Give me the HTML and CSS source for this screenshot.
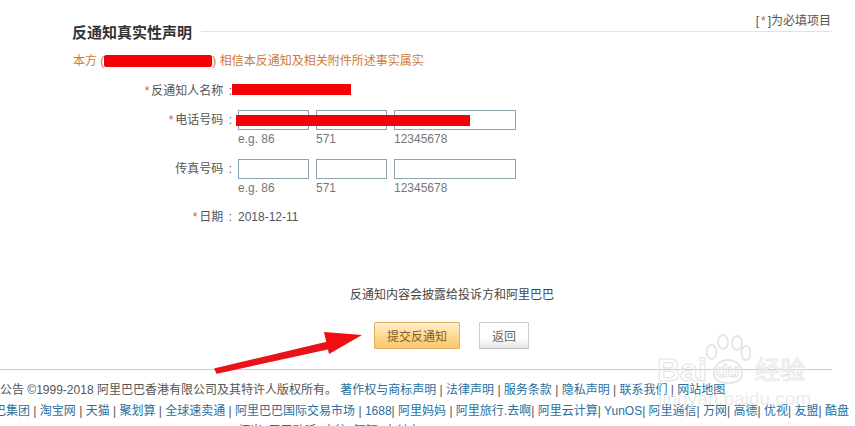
FILE: index.html
```html
<!DOCTYPE html>
<html lang="zh-CN">
<head>
  <meta charset="UTF-8">
  <title>反通知真实性声明</title>
  <link rel="stylesheet" href="styles.css">
</head>
<body>
  <div class="page">
    <div class="form-area">
      <div class="title-row">
        <h2>反通知真实性声明</h2>
        <span class="title-line"></span>
        <span class="required-note">[<i>*</i>]为必填项目</span>
      </div>

      <p class="statement">本方 (<span class="redact statement-redact"></span>) 相信本反通知及相关附件所述事实属实</p>

      <div class="field name-field">
        <label><i>*</i>反通知人名称 :</label>
        <span class="redact name-redact"></span>
      </div>

      <div class="field phone-field">
        <label><i>*</i>电话号码 :</label>
        <div class="inputs">
          <div class="part"><input type="text"><span>e.g. 86</span></div>
          <div class="part"><input type="text"><span>571</span></div>
          <div class="part wide"><input type="text"><span>12345678</span></div>
        </div>
        <span class="redact phone-redact"></span>
      </div>

      <div class="field fax-field">
        <label>传真号码 :</label>
        <div class="inputs">
          <div class="part"><input type="text"><span>e.g. 86</span></div>
          <div class="part"><input type="text"><span>571</span></div>
          <div class="part wide"><input type="text"><span>12345678</span></div>
        </div>
      </div>

      <div class="field date-field">
        <label><i>*</i>日期 :</label>
        <span class="date">2018-12-11</span>
      </div>
    </div>

    <p class="disclose">反通知内容会披露给投诉方和阿里巴巴</p>

    <div class="actions">
      <button class="btn-submit">提交反通知</button>
      <button class="btn-back">返回</button>
    </div>

    <div class="footer">
      <p>公告 ©1999-2018 阿里巴巴香港有限公司及其特许人版权所有。 <a href="#">著作权与商标声明</a> | <a href="#">法律声明</a> | <a href="#">服务条款</a> | <a href="#">隐私声明</a> | <a href="#">联系我们</a> | <a href="#">网站地图</a></p>
      <p class="group-links"><a href="#">巴集团</a> | <a href="#">淘宝网</a> | <a href="#">天猫</a> | <a href="#">聚划算</a> | <a href="#">全球速卖通</a> | <a href="#">阿里巴巴国际交易市场</a> | <a href="#">1688</a>| <a href="#">阿里妈妈</a> | <a href="#">阿里旅行.去啊</a>| <a href="#">阿里云计算</a>| <a href="#">YunOS</a>| <a href="#">阿里通信</a>| <a href="#">万网</a>| <a href="#">高德</a>| <a href="#">优视</a>| <a href="#">友盟</a>| <a href="#">酷盘</a></p>
      <p class="more-links"><a href="#">虾米</a>| <a href="#">天天动听</a>| <a href="#">来往</a>| <a href="#">钉钉</a>| <a href="#">支付宝</a></p>
    </div>

    <!-- red arrow pasted over the screenshot -->
    <svg class="arrow" width="160" height="50" viewBox="0 0 160 50">
      <path d="M4 39 L118 12 L120 18 L6 43 Z" fill="#e8141a" stroke="#e8141a" stroke-width="1.5" stroke-linejoin="round"/>
      <path d="M113 2 L151 5 L118 24 Z" fill="#f20d12"/>
    </svg>

    <div class="watermark">
      <span class="mark-bai">Bai</span>
      <svg class="paw" width="46" height="52" viewBox="0 0 46 52" fill="none" stroke="#e6e6e6" stroke-width="2">
        <ellipse cx="6.5" cy="19" rx="5" ry="7"/>
        <ellipse cx="18" cy="9" rx="5" ry="7"/>
        <ellipse cx="32" cy="10" rx="5" ry="7"/>
        <ellipse cx="41" cy="20" rx="4.5" ry="7"/>
        <path d="M23 27 C15 27 9 33 9 40 C9 47 15 50 23 50 C31 50 37 47 37 40 C37 33 31 27 23 27 Z"/>
      </svg>
      <span class="mark-du">du</span>
      <span class="mark-jy">经验</span>
      <span class="mark-url">jingyan.baidu.com</span>
    </div>
  </div>
</body>
</html>
```

FILE: styles.css
```css
html, body {
  margin: 0;
  padding: 0;
  background-color: #fff;
}

body {
  width: 855px;
  height: 426px;
  overflow: hidden;
  font-family: "Liberation Sans", "Noto Sans CJK SC", sans-serif;
  font-size: 12px;
  color: #555;
}

.page {
  position: relative;
  width: 855px;
  height: 426px;
  overflow: hidden;
}

i {
  font-style: normal;
  color: #d9534f;
}

.form-area {
  width: 760px;
  margin-left: 72px;
  padding-top: 13px;
}

.title-row {
  display: flex;
  align-items: center;
  height: 36px;
}

.title-row h2 {
  margin: 0 9px 0 0;
  font-size: 15px;
  font-weight: bold;
  color: #333;
}

.title-line {
  flex: 1;
  height: 1px;
  background-color: #e2e2e2;
}

.required-note {
  position: absolute;
  top: 11px;
  right: 24px;
  background-color: #fff;
  color: #555;
}

.required-note i {
  margin: 0 2px;
}

.statement {
  margin: 5px 0 0 1px;
  height: 14px;
  line-height: 14px;
  color: #cc7a3e;
}

.redact {
  display: inline-block;
  background-color: #f40008;
}

.statement-redact {
  width: 108px;
  height: 12px;
  vertical-align: -2px;
  border-radius: 2px;
}

.field {
  display: flex;
  position: relative;
}

.field label {
  box-sizing: border-box;
  width: 166px;
  flex: none;
  padding-right: 6px;
  text-align: right;
  word-spacing: 2px;
  color: #555;
}

.field label i {
  margin-right: 2px;
}

.name-field {
  margin-top: 13px;
  align-items: center;
  height: 16px;
}

.name-redact {
  width: 119px;
  height: 11px;
  margin-left: -6px;
}

.phone-field {
  margin-top: 13px;
}

.phone-field label,
.fax-field label {
  line-height: 20px;
}

.inputs {
  display: flex;
  gap: 7px;
}

.part {
  display: flex;
  flex-direction: column;
  width: 71px;
}

.part.wide {
  width: 122px;
}

.part input {
  box-sizing: border-box;
  width: 100%;
  height: 20px;
  padding: 0;
  border: 1px solid #8fa3ad;
  background-color: #fff;
}

.part span {
  margin-top: 2px;
  line-height: 14px;
  color: #777;
}

.phone-redact {
  position: absolute;
  left: 164px;
  top: 5px;
  width: 234px;
  height: 11px;
}

.fax-field {
  margin-top: 13px;
}

.date-field {
  margin-top: 15px;
  line-height: 14px;
}

.date {
  color: #555;
}

.disclose {
  position: absolute;
  top: 288px;
  left: 350px;
  margin: 0;
  line-height: 14px;
  color: #444;
}

.actions {
  position: absolute;
  top: 322px;
  left: 374px;
  display: flex;
  gap: 19px;
}

.actions button {
  box-sizing: border-box;
  height: 27px;
  padding: 0;
  font-family: inherit;
  font-size: 12px;
  border-radius: 1px;
}

.btn-submit {
  width: 86px;
  color: #8a5a1c;
  border: 1px solid #e5ae5c;
  background: linear-gradient(#fff0cf, #fbd58c 60%, #f7c873);
}

.btn-back {
  width: 50px;
  color: #666;
  border: 1px solid #ccc;
  border-bottom-color: #bbb;
  background: linear-gradient(#fff, #fff 60%, #e4e4e4);
}

.footer {
  position: absolute;
  top: 369px;
  left: 0;
  width: 832px;
  border-top: 1px solid #ccc;
  white-space: nowrap;
}

.footer p {
  margin: 0;
  line-height: 20px;
  color: #555;
}

.footer p:first-child {
  margin-top: 10px;
}

.footer a {
  color: #2a6f9e;
  text-decoration: none;
}

.footer .group-links {
  margin-left: -6px;
  margin-top: 1px;
}

.footer .more-links {
  margin-top: 0;
  margin-left: 238px;
}

.arrow {
  position: absolute;
  left: 211px;
  top: 330px;
  filter: blur(0.4px);
}

.watermark {
  position: absolute;
  left: 657px;
  top: 333px;
  width: 150px;
  height: 72px;
  pointer-events: none;
}

.paw {
  position: absolute;
  left: 48px;
  top: 0;
}

.mark-bai {
  position: absolute;
  left: 0;
  top: 21px;
  font-size: 32px;
  line-height: 32px;
  font-weight: bold;
  color: transparent;
  -webkit-text-stroke: 1px #e4e4e4;
}

.mark-du {
  position: absolute;
  left: 59px;
  top: 27px;
  font-size: 19px;
  line-height: 22px;
  font-weight: bold;
  color: transparent;
  -webkit-text-stroke: 1px #e4e4e4;
}

.mark-jy {
  position: absolute;
  left: 98px;
  top: 22px;
  font-size: 25px;
  line-height: 30px;
  color: transparent;
  -webkit-text-stroke: 1px #e8e8e8;
}

.mark-url {
  position: absolute;
  left: 1px;
  top: 58px;
  font-size: 19px;
  line-height: 16px;
  color: #ececec;
}
```
